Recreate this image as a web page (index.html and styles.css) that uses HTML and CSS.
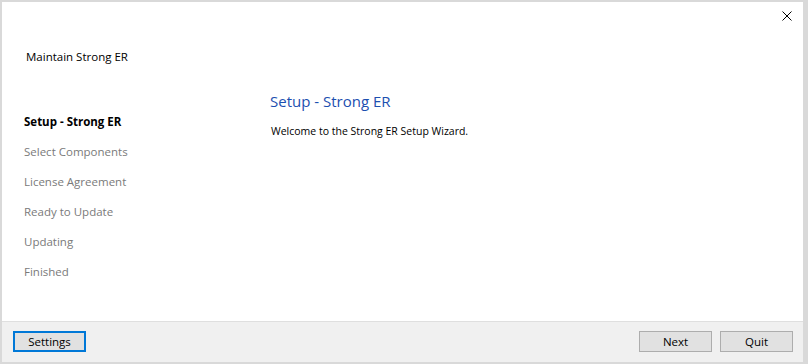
FILE: index.html
```html
<!DOCTYPE html>
<html lang="en">
<head>
    <meta charset="UTF-8">
    <title>Maintain Strong ER</title>
    <link rel="stylesheet" href="styles.css">
</head>
<body>
    <div class="wizard">
        <div class="wizard-top">
            <button class="close-btn" aria-label="Close">
                <svg viewBox="0 0 10 10" width="10" height="10" stroke="#000" stroke-width="1" fill="none">
                    <line x1="0.5" y1="0.5" x2="9.5" y2="9.5"></line>
                    <line x1="9.5" y1="0.5" x2="0.5" y2="9.5"></line>
                </svg>
            </button>
        </div>
        <div class="app-title">Maintain Strong ER</div>
        <div class="wizard-main">
            <ul class="steps">
                <li class="step active">Setup - Strong ER</li>
                <li class="step">Select Components</li>
                <li class="step">License Agreement</li>
                <li class="step">Ready to Update</li>
                <li class="step">Updating</li>
                <li class="step">Finished</li>
            </ul>
            <div class="page">
                <h1 class="page-title">Setup - Strong ER</h1>
                <p class="page-text">Welcome to the Strong ER Setup Wizard.</p>
            </div>
        </div>
        <div class="wizard-footer">
            <button class="btn btn-focus">Settings</button>
            <div class="footer-right">
                <button class="btn">Next</button>
                <button class="btn">Quit</button>
            </div>
        </div>
    </div>
</body>
</html>
```

FILE: styles.css
```css
* {
    margin: 0;
    padding: 0;
    box-sizing: border-box;
}

body {
    background-color: #d9d9d9;
    font-family: 'Open Sans', 'Noto Sans', sans-serif;
    font-size: 11.5px;
    color: #000;
    width: 808px;
    height: 364px;
    overflow: hidden;
}

.wizard {
    margin: 2px 0 0 2px;
    width: 801px;
    height: 360px;
    background-color: #ffffff;
    display: flex;
    flex-direction: column;
}

.wizard-top {
    height: 28px;
    display: flex;
    justify-content: flex-end;
    align-items: center;
    padding-right: 11px;
}

.close-btn {
    border: none;
    background: none;
    width: 10px;
    height: 10px;
    display: flex;
}

.app-title {
    margin: 19px 0 0 24px;
    line-height: 16px;
}

.wizard-main {
    flex: 1;
    display: flex;
}

.steps {
    list-style: none;
    width: 268px;
    padding: 42px 0 0 22px;
}

.step {
    line-height: 30px;
    color: #7a7a7a;
}

.step.active {
    color: #000;
    font-weight: 700;
}

.page {
    padding-top: 26px;
}

.page-title {
    font-size: 15px;
    font-weight: 400;
    line-height: 20px;
    color: #1c4fb0;
}

.page-text {
    margin: 12px 0 0 1px;
    font-size: 10.5px;
    line-height: 16px;
}

.wizard-footer {
    height: 41px;
    background-color: #f0f0f0;
    border-top: 1px solid #dfdfdf;
    display: flex;
    justify-content: space-between;
    align-items: flex-start;
    padding: 9px 10px 0 11px;
}

.footer-right {
    display: flex;
    gap: 8px;
}

.btn {
    width: 73px;
    height: 21px;
    background-color: #e1e1e1;
    border: 1px solid #adadad;
    font-family: inherit;
    font-size: 11.5px;
    color: #000;
}

.btn-focus {
    border: 2px solid #0078d7;
}
```
